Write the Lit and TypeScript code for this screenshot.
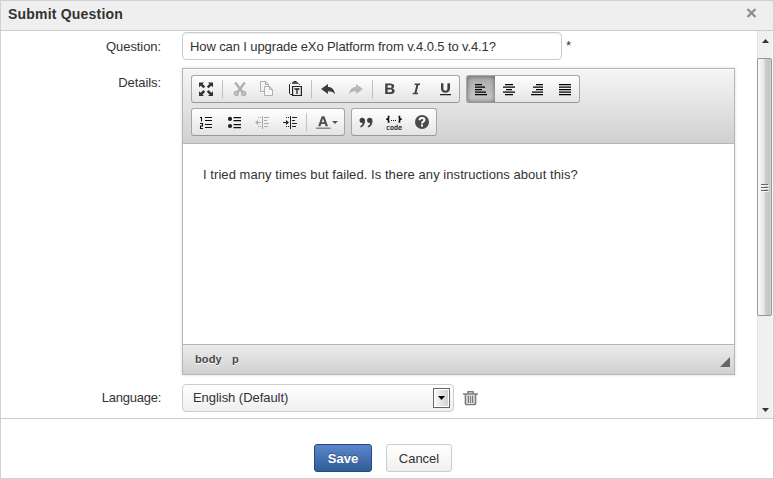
import { LitElement, html, svg, css } from "lit";
import { customElement } from "lit/decorators.js";
import { classMap } from "lit/directives/class-map.js";

const icons: Record<string, unknown> = {
  maximize: svg`<g fill="#333"><path d="M1 1.500h5L4.600 3l2.600 2.600-1.700 1.700L2.800 4.700 1 6.300zM15 1.500h-5L11.400 3 8.800 5.600l1.700 1.700L13.200 4.700 15 6.300zM1 15v-4.800l1.600 1.600L5.500 9l1.700 1.700-2.700 2.800L6 15zM15 15v-4.800l-1.600 1.600L10.500 9l-1.700 1.700 2.700 2.800L10 15z"/></g>`,
  cut: svg`<g fill="none" stroke="#b0b0b0"><path stroke-width="2.400" d="M4.300 1.500 L11.300 11 M13.700 1.500 L6.700 11"/><circle cx="5.300" cy="12.500" r="1.700" stroke-width="1.900"/><circle cx="12.700" cy="12.500" r="1.700" stroke-width="1.900"/></g>`,
  copy: svg`<g fill="none" stroke="#b0b0b0"><path d="M5 10.500H1.500V.5h5l3 3V5M6.500 .5v3h3"/><path fill="#f8f8f8" d="M5.500 5.500h5l3 3v6h-8zM10.500 5.500v3h3"/></g>`,
  paste: svg`<g fill="none" stroke="#222"><path d="M5.500 13.500h-2l-1-1v-9l1-1M11.500 2.500l1 1V4"/><path stroke-width="1.600" d="M5 2h6"/><path d="M6.500 .5h3"/><path stroke-width="1.200" d="M5.600 5.500h8.800v9H5.600z"/><path stroke-width="1.300" d="M7.500 8h5M10 8v5"/></g>`,
  undo: svg`<path fill="#3c3c3c" d="M1 8 8 3v3c4 0 6.500 2.500 7 7.500C13.500 11 11.500 10.300 8 10.300V13z"/>`,
  redo: svg`<path fill="#b8b8b8" d="M15 8 8 3v3C4 6 1.500 8.500 1 13.500 2.500 11 4.500 10.300 8 10.300V13z"/>`,
  bold: svg`<path fill="#404040" transform="translate(.2 .7) scale(1 .88)" fill-rule="evenodd" d="M4 2h5c2.500 0 4 1 4 3 0 1.500-.8 2.300-1.800 2.700 1.400.4 2.300 1.400 2.300 2.900 0 2.200-1.700 3.400-4.300 3.400H4zM6.400 4v3h2.300c1.200 0 1.800-.5 1.800-1.500S9.900 4 8.700 4zM6.400 8.800V12h2.600c1.200 0 1.900-.6 1.900-1.600S10.200 8.800 9 8.800z"/>`,
  italic: svg`<path fill="#404040" transform="translate(1.200 .6) scale(.93)" d="M5 2h5.800l-.4 1.700H8.800L6.800 12h1.700l-.4 1.700H2.500L3 12h1.600l2-8.300H4.600z"/>`,
  underline: svg`<path fill="#404040" d="M4 2.300h2.400v5.200c0 1.500.6 2.200 2 2.200s2-.7 2-2.200V2.300H13v5.200c0 2.700-1.600 4.200-4.600 4.200S4 10.200 4 7.500z"/><path fill="#222" d="M3 13h11v1.200H3z"/>`,
  left: svg`<path fill="#000" d="M2 3h7v1.200H2zM2 5.600h10v1.200H2zM2 8h7v1.200H2zM2 10.600h11v1.200H2zM2 13h12v1.200H2z"/>`,
  center: svg`<path fill="#000" d="M4 3h8v1.200H4zM2 5.600h12v1.200H2zM5 8h6v1.200H5zM2 10.600h12v1.200H2zM4 13h8v1.200H4z"/>`,
  right: svg`<path fill="#000" d="M7 3h7v1.200H7zM4 5.600h10v1.200H4zM7 8h7v1.200H7zM3 10.600h11v1.200H3zM2 13h12v1.200H2z"/>`,
  justify: svg`<path fill="#000" d="M2 3h12v1.200H2zM2 5.600h12v1.200H2zM2 8h12v1.200H2zM2 10.600h12v1.200H2zM2 13h12v1.200H2z"/>`,
  numbered: svg`<g fill="none" stroke="#111"><path stroke-width="1.100" d="M7 3.500h7M7 6.500h7M7 10.500h7M7 13.500h7"/><path stroke-width="1.100" d="M2 3.500h1.500v4M2 9.500h2.500v2.500H2.500v2.500H5"/></g>`,
  bulleted: svg`<g fill="#222"><circle cx="4" cy="4.900" r="2.100"/><circle cx="4" cy="12" r="2.100"/><path fill="#111" d="M7.500 3H15v1.200H7.500zM7.500 6H15v1.200H7.500zM7.500 10H15v1.200H7.500zM7.500 13H15v1.200H7.500z"/></g>`,
  outdent: svg`<g fill="none" stroke="#aaa"><path d="M8.500 2v13"/><path d="M10 3.500h5M10 6.500h3M10 9.500h5M10 12.500h4M4 3.500h1M6 3.500h1M4 12.500h1M6 12.500h1M3 8.500h4"/><path fill="#aaa" stroke="none" d="M1 8.500l3-2.500v5z"/></g>`,
  indent: svg`<g fill="none" stroke="#222"><path d="M8.500 2v13"/><path d="M10 3.500h5M10 6.500h3M10 9.500h5M10 12.500h4M4 3.500h1M6 3.500h1M4 12.500h1M6 12.500h1M1 8.500h4"/><path fill="#222" stroke="none" d="M7 8.500 4 6v5z"/></g>`,
  color: svg`<path fill="#505050" transform="translate(0 1.200)" fill-rule="evenodd" d="M6.700 1h2.800L13 11h-2.400l-.7-2.200H6.200L5.500 11H3.100zM8 3.400 6.800 7.100h2.500z"/><path fill="#888" d="M1 13.600h14.500V15H1z"/>`,
  quote: svg`<path fill="#404040" transform="translate(0 .8)" d="M1.500 5.500C1.500 4 2.500 3 4.200 3c1.800 0 2.800 1.200 2.800 3.200 0 3.300-1.600 5.700-4.600 6.600v-1.700c1.400-.6 2.200-1.600 2.300-2.900C2.700 8.500 1.500 7.200 1.500 5.500zM9 5.500C9 4 10 3 11.700 3c1.800 0 2.800 1.200 2.800 3.200 0 3.300-1.600 5.700-4.600 6.600v-1.700c1.400-.6 2.200-1.600 2.300-2.900C10.200 8.500 9 7.200 9 5.500z"/>`,
  code: svg`<g fill="none" stroke="#111"><path stroke-width="1.500" d="M3.500 2.500h-1v2L1 5.200l1.500 .8v2h1M12.500 2.500h1v2l1.500.7-1.500.8v2h-1"/><path stroke-dasharray="1 1" d="M5 6.500h6"/></g><text x="0" y="15.500" textLength="16" lengthAdjust="spacingAndGlyphs">code</text>`,
  help: svg`<circle cx="8" cy="8" r="7" fill="#4b4b4b"/><path fill="none" stroke="#fff" stroke-width="2" d="M5.500 6.200C5.500 4.700 6.500 4 8 4s2.500.8 2.500 2C10.500 7.700 8 7.500 8 9.500"/><path fill="#fff" d="M7 10.500h2v2H7z"/>`,
};

@customElement("app-root")
export class AppRoot extends LitElement {
  static styles = css`
    :host { display: block; height: 479px; font: 13px/20px "Liberation Sans", Arial, sans-serif; color: #333; }
    * { box-sizing: border-box; }
    .dialog { height: 479px; border: 1px solid #d0d0d0; display: grid; grid-template-rows: 30px 388px 1fr; background: #fff; }
    header { background: #efefef; border-bottom: 1px solid #ccc; display: flex; justify-content: space-between; padding: 3px 16px 0 7px; font-weight: bold; font-size: 14px; letter-spacing: .2px; }
    header svg { margin-top: 4px; }
    .scroll { display: grid; grid-template-columns: 1fr 16px; border-bottom: 1px solid #ccc; }
    .form { padding-top: 1px; }
    .field { display: flex; align-items: flex-start; }
    .label { width: 160px; text-align: right; padding-top: 5px; margin-right: 21px; letter-spacing: -.08px; }
    .lang .label { letter-spacing: -.25px; padding-top: 4px; }
    .input { width: 380px; height: 28px; border: 1px solid #ccc; border-radius: 4px; padding: 4px 7px; box-shadow: inset 0 1px 1px rgba(0,0,0,.075); white-space: nowrap; letter-spacing: -.11px; }
    .star { margin: 4px 0 0 4px; }
    .details { margin-top: 8px; }
    .editor { width: 553px; height: 307px; border: 1px solid #b6b6b6; box-shadow: 0 0 3px rgba(0,0,0,.15); display: grid; grid-template-rows: 75px 1fr 30px; }
    .bars { background: linear-gradient(#f5f5f5, #cfd1cf); border-bottom: 1px solid #b6b6b6; box-shadow: inset 0 1px #fff; display: flex; flex-direction: column; gap: 5px; padding: 6px 8px; }
    .row { display: flex; gap: 6px; }
    .group { display: flex; height: 28px; border: 1px solid #a6a6a6; border-bottom-color: #979797; border-radius: 3px; background: linear-gradient(#fff, #e4e4e4); overflow: hidden; }
    .tool { width: 28px; padding: 5px 6px; display: flex; }
    .tool.on { background: linear-gradient(#aaa, #cacaca); box-shadow: inset 0 0 5px rgba(0,0,0,.5); }
    .tool.wide { width: 35px; }
    .sep { width: 1px; height: 18px; margin: 4px 2px 0; background: #c0c0c0; }
    svg { display: block; flex: none; }
    svg text { font: 7px "DejaVu Sans Mono", monospace; fill: #111; stroke: #111; stroke-width: .2px; }
    .arrow { border: 3px solid transparent; border-top-color: #555; border-bottom: 0; margin: 7px 0 0 1px; width: 6px; height: 3px; }
    .content { padding: 21px 20px; letter-spacing: .06px; }
    .status { background: linear-gradient(#ebebeb, #cfd1cf); border-top: 1px solid #b6b6b6; display: flex; justify-content: space-between; font: bold 11px/14px "Liberation Sans", Arial, sans-serif; color: #484848; padding: 7px 4px 0 12px; text-shadow: 0 1px #fff; }
    .path { display: flex; gap: 10px; letter-spacing: .15px; }
    .status svg { margin-top: 5px; }
    .lang { margin-top: 9px; }
    .select { width: 272px; height: 28px; border: 1px solid #ccc; border-radius: 4px; background: linear-gradient(#fff, #efefef); padding: 3px 3px 0 10px; display: flex; justify-content: space-between; letter-spacing: -.05px; }
    .drop { width: 17px; height: 20px; border: 1px solid #666; background: linear-gradient(90deg, #fafafa, #d0d0d0); box-shadow: inset 0 0 0 1px #fff; display: grid; place-items: center; }
    .trash { margin: 6px 0 0 8px; }
    .track { background: #f0f0f0; border-left: 1px solid #e2e2e2; border-right: 1px solid #f7f7f7; display: grid; grid-template-rows: 27px 258px 1fr; }
    .thumb { border: 1px solid #979797; border-radius: 2px; background: linear-gradient(90deg, #f8f8f8 0 5%, #e9e9eb 45%, #cfcfd3 55%, #c3c3c8 85%, #d8d8da); display: grid; place-items: center; margin-left: -1px; }
    .up { padding: 8px 0 0 4px; }
    .down { padding: 0 0 6px 4px; align-self: end; }
    footer { display: flex; justify-content: center; gap: 14px; padding: 25px 8px 0 0; }
    .btn { height: 28px; border: 1px solid #ccc; border-radius: 3px; padding: 4px 0; text-align: center; width: 66px; background: linear-gradient(#fff, #f0f0f0); }
    .btn.save { width: 58px; color: #fff; font-weight: bold; border-color: #224886; background: linear-gradient(#5c86cb, #2f5d96); text-shadow: 0 -1px rgba(0,0,0,.25); }
  `;

  private tool(name: string) {
    if (name === "|") return html`<span class="sep"></span>`;
    return html`<span class=${classMap({ tool: true, on: name === "left", wide: name === "color" })}>
      <svg width="16" height="16" viewBox="0 0 16 16">${icons[name]}</svg>${name === "color" ? html`<i class="arrow"></i>` : ""}</span>`;
  }

  private group(names: string) {
    return html`<div class="group">${names.split(" ").map((n) => this.tool(n))}</div>`;
  }

  render() {
    return html`<div class="dialog">
      <header><span>Submit Question</span>
        <svg width="11" height="10" viewBox="0 0 11 10"><path d="M1.500 1l8 8M9.500 1l-8 8" stroke="#909090" stroke-width="2.400"/></svg>
      </header>
      <div class="scroll">
        <div class="form">
          <div class="field"><span class="label">Question:</span><div class="input">How can I upgrade eXo Platform from v.4.0.5 to v.4.1?</div><span class="star">*</span></div>
          <div class="field details"><span class="label">Details:</span>
            <div class="editor">
              <div class="bars">
                <div class="row">${this.group("maximize | cut copy paste | undo redo | bold italic underline")}${this.group("left center right justify")}</div>
                <div class="row">${this.group("numbered bulleted outdent indent | color")}${this.group("quote code help")}</div>
              </div>
              <div class="content">I tried many times but failed. Is there any instructions about this?</div>
              <div class="status"><div class="path"><span>body</span><span>p</span></div>
                <svg width="10" height="10"><path d="M10 0v10H0z" fill="#666"/></svg></div>
            </div>
          </div>
          <div class="field lang"><span class="label">Language:</span>
            <div class="select"><span>English (Default)</span><span class="drop"><svg width="7" height="4"><path d="M0 0h7L3.500 4z" fill="#000"/></svg></span></div>
            <svg class="trash" width="17" height="16" viewBox="0 0 17 16"><g fill="none" stroke="#7c7c7c"><path stroke-width="1.500" d="M1 4h15M6 3.500V1.700h5v1.800"/><path stroke-width="1.700" d="M3.500 4v9.500q0 1 1 1h8q1 0 1-1V4"/><path stroke-width="1.500" d="M6.300 5.500v7.500M8.500 5.500v7.500M10.700 5.500v7.500"/></g></svg>
          </div>
        </div>
        <div class="track">
          <div class="up"><svg width="7" height="4"><path d="M0 4h7L3.500 0z" fill="#333"/></svg></div>
          <div class="thumb"><svg width="8" height="9"><path d="M0 1.500h7M0 4.500h7M0 7.500h7" stroke="#666"/><path d="M1 2.500h7M1 5.500h7M1 8.500h7" stroke="#f5f5f5"/></svg></div>
          <div class="down"><svg width="7" height="4"><path d="M0 0h7L3.500 4z" fill="#333"/></svg></div>
        </div>
      </div>
      <footer><div class="btn save">Save</div><div class="btn">Cancel</div></footer>
    </div>`;
  }
}
